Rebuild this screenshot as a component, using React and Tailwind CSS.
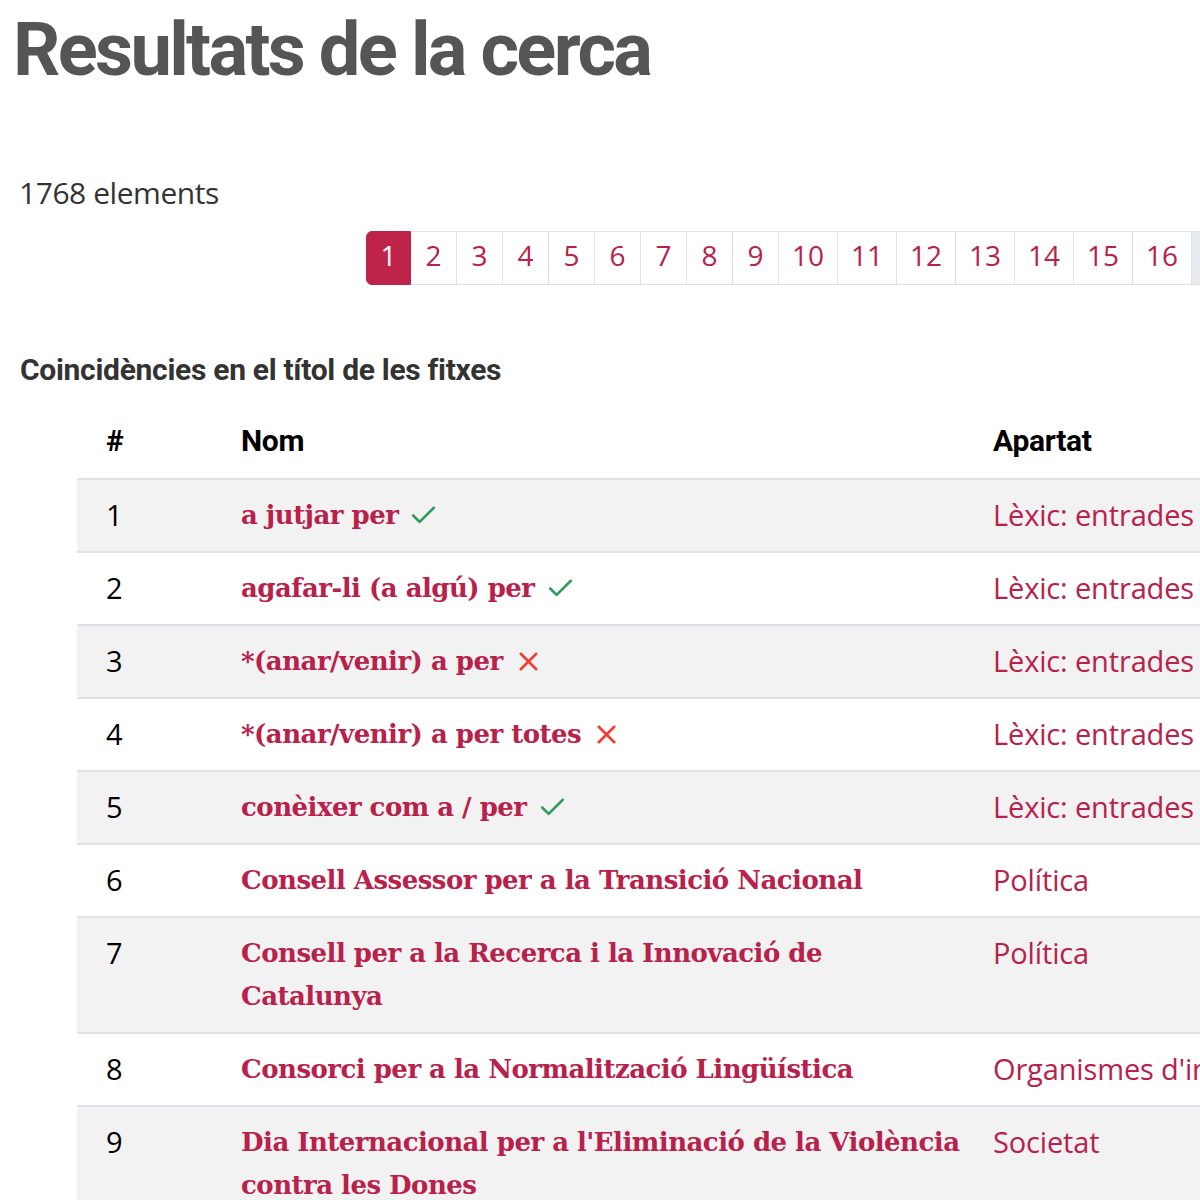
import { Check, X } from 'lucide-react';

const pages = ['1', '2', '3', '4', '5', '6', '7', '8', '9', '10', '11', '12', '13', '14', '15', '16'];

const rows = [
  { n: 1, nom: 'a jutjar per', mark: 'ok', apartat: 'Lèxic: entrades' },
  { n: 2, nom: 'agafar-li (a algú) per', mark: 'ok', apartat: 'Lèxic: entrades' },
  { n: 3, nom: '*(anar/venir) a per', mark: 'ko', apartat: 'Lèxic: entrades' },
  { n: 4, nom: '*(anar/venir) a per totes', mark: 'ko', apartat: 'Lèxic: entrades' },
  { n: 5, nom: 'conèixer com a / per', mark: 'ok', apartat: 'Lèxic: entrades' },
  { n: 6, nom: 'Consell Assessor per a la Transició Nacional', apartat: 'Política' },
  { n: 7, nom: 'Consell per a la Recerca i la Innovació de Catalunya', apartat: 'Política' },
  { n: 8, nom: 'Consorci per a la Normalització Lingüística', apartat: "Organismes d'interès" },
  { n: 9, nom: "Dia Internacional per a l'Eliminació de la Violència contra les Dones", apartat: 'Societat' },
];

export default function App() {
  return (
    <div className="w-[1200px] h-[1200px] overflow-hidden bg-white">
      <div className="w-[1400px] pl-[13px] pt-[8px]">
        <h1 className="font-['Roboto',sans-serif] font-bold text-[74px] leading-[84px] tracking-[-0.036em] text-[#555]">
          Resultats de la cerca
        </h1>

        <p className="mt-[81px] pl-[6px] font-['Open_Sans',sans-serif] text-[30px] leading-[40px] text-[#333] tracking-[-0.015em]">
          1768 elements
        </p>

        {/* paginació */}
        <div className="mt-[18px] ml-[353px] flex font-['Open_Sans',sans-serif] text-[28px]">
          {pages.map((p, i) => (
            <a
              key={p}
              className={
                i === 0
                  ? 'h-[54px] w-[45px] pb-[6px] flex items-center justify-center rounded-l-[6px] bg-[#c0234a] text-white border border-[#c0234a]'
                  : 'h-[54px] pb-[6px] flex items-center justify-center border border-l-0 border-[#dee2e6] text-[#b8214a] ' +
                    (p.length > 1 ? 'w-[59px]' : 'w-[46px]')
              }
            >
              {p}
            </a>
          ))}
          <span className="h-[54px] w-[40px] bg-[#e9ecef] border border-l-0 border-[#dee2e6]" />
        </div>

        <h2 className="mt-[65px] pl-[7px] font-['Roboto',sans-serif] font-bold text-[30px] leading-[40px] tracking-[-0.01em] text-[#333]">
          Coincidències en el títol de les fitxes
        </h2>

        <table className="mt-[28px] ml-[64px] w-[1300px] border-collapse">
          <thead>
            <tr className="font-['Roboto',sans-serif] font-bold text-[30px] text-black tracking-[-0.01em]">
              <th className="w-[135px] pl-[29px] pb-[15px] text-left align-bottom">#</th>
              <th className="w-[752px] pl-[29px] pb-[15px] text-left align-bottom">Nom</th>
              <th className="pl-[29px] pb-[15px] text-left align-bottom">Apartat</th>
            </tr>
          </thead>
          <tbody>
            {rows.map((r, i) => (
              <tr key={r.n} className={'border-t-2 border-[#dee2e6] ' + (i % 2 === 0 ? 'bg-[#f2f2f2]' : 'bg-white')}>
                <td className="pl-[29px] pt-[13px] pb-[15px] align-top font-['Open_Sans',sans-serif] text-[29px] leading-[43px] text-black">
                  {r.n}
                </td>
                <td className="pl-[29px] pt-[14px] pb-[14px] pr-[4px] align-top font-['DejaVu_Serif',serif] font-bold text-[26px] leading-[43px] text-[#b8214a] tracking-[-0.02em]">
                  {r.nom}
                  {r.mark === 'ok' && <Check className="inline-block ml-[10px] -mt-[4px] h-[31px] w-[31px] text-[#2f9a5a]" strokeWidth={2} />}
                  {r.mark === 'ko' && <X className="inline-block ml-[10px] -mt-[4px] h-[31px] w-[31px] text-[#f03c32]" strokeWidth={2} />}
                </td>
                <td className="pl-[29px] pt-[13px] pb-[15px] align-top font-['Open_Sans',sans-serif] text-[29px] leading-[43px] text-[#b8214a] tracking-[-0.005em] whitespace-nowrap">
                  {r.apartat}
                </td>
              </tr>
            ))}
          </tbody>
        </table>
      </div>
    </div>
  );
}
